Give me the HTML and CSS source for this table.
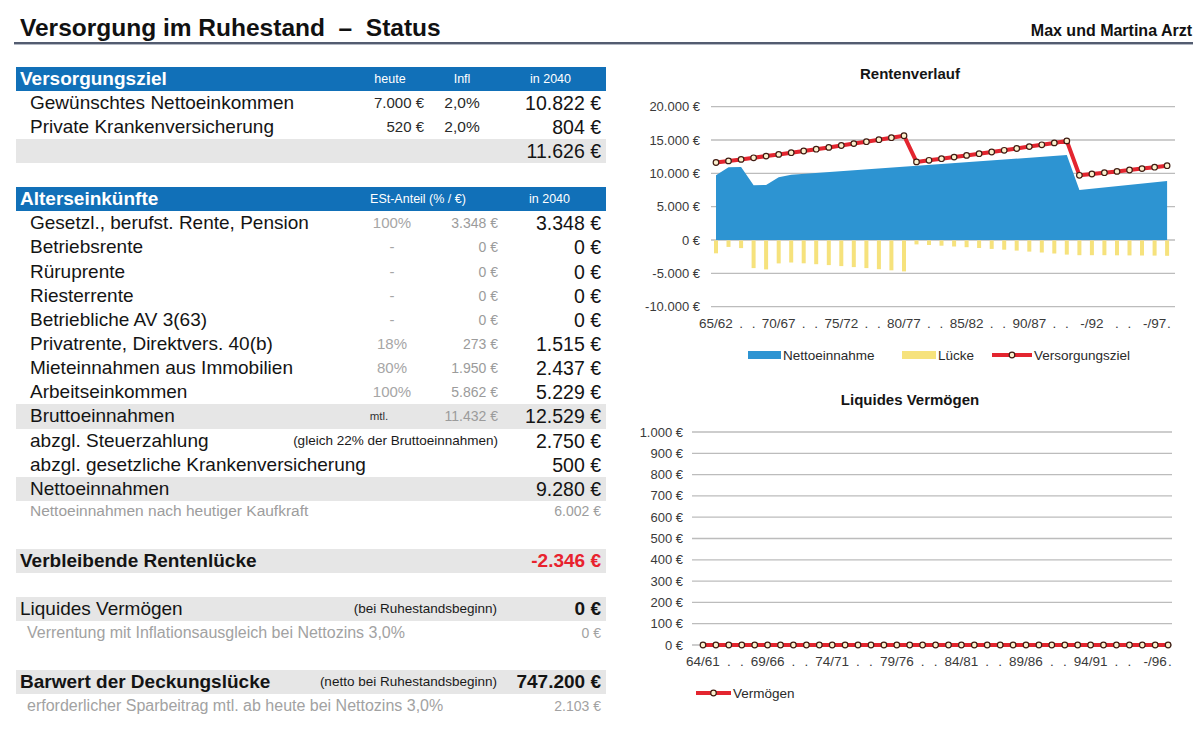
FILE: index.html
```html
<!DOCTYPE html>
<html lang="de">
<head>
<meta charset="utf-8">
<title>Versorgung im Ruhestand – Status</title>
<link rel="stylesheet" href="styles.css">
</head>
<body>
<header class="top">
  <h1 class="title">Versorgung im Ruhestand &nbsp;–&nbsp; Status</h1>
  <div class="owner">Max und Martina Arzt</div>
</header>

<div class="main">
  <section class="left">
    <div class="tbl t1">
      <div class="row head"><span class="lbl">Versorgungsziel</span><span class="c1">heute</span><span class="c2">Infl</span><span class="c3">in 2040</span></div>
      <div class="row"><span class="lbl">Gewünschtes Nettoeinkommen</span><span class="c1">7.000 €</span><span class="c2">2,0%</span><span class="c3">10.822 €</span></div>
      <div class="row"><span class="lbl">Private Krankenversicherung</span><span class="c1">520 €</span><span class="c2">2,0%</span><span class="c3">804 €</span></div>
      <div class="row band"><span class="lbl"></span><span class="c3">11.626 €</span></div>
    </div>

    <div class="tbl t2">
      <div class="row head"><span class="lbl">Alterseinkünfte</span><span class="cspan">ESt-Anteil (% / €)</span><span class="c3">in 2040</span></div>
      <div class="row"><span class="lbl">Gesetzl., berufst. Rente, Pension</span><span class="c1">100%</span><span class="c2">3.348 €</span><span class="c3">3.348 €</span></div>
      <div class="row"><span class="lbl">Betriebsrente</span><span class="c1">-</span><span class="c2">0 €</span><span class="c3">0 €</span></div>
      <div class="row"><span class="lbl">Rüruprente</span><span class="c1">-</span><span class="c2">0 €</span><span class="c3">0 €</span></div>
      <div class="row"><span class="lbl">Riesterrente</span><span class="c1">-</span><span class="c2">0 €</span><span class="c3">0 €</span></div>
      <div class="row"><span class="lbl">Betriebliche AV 3(63)</span><span class="c1">-</span><span class="c2">0 €</span><span class="c3">0 €</span></div>
      <div class="row"><span class="lbl">Privatrente, Direktvers. 40(b)</span><span class="c1">18%</span><span class="c2">273 €</span><span class="c3">1.515 €</span></div>
      <div class="row"><span class="lbl">Mieteinnahmen aus Immobilien</span><span class="c1">80%</span><span class="c2">1.950 €</span><span class="c3">2.437 €</span></div>
      <div class="row"><span class="lbl">Arbeitseinkommen</span><span class="c1">100%</span><span class="c2">5.862 €</span><span class="c3">5.229 €</span></div>
      <div class="row band"><span class="lbl">Bruttoeinnahmen</span><span class="c1 mtl">mtl.</span><span class="c2">11.432 €</span><span class="c3">12.529 €</span></div>
      <div class="row"><span class="lbl">abzgl. Steuerzahlung</span><span class="note">(gleich 22% der Bruttoeinnahmen)</span><span class="c3">2.750 €</span></div>
      <div class="row"><span class="lbl">abzgl. gesetzliche Krankenversicherung</span><span class="c3">500 €</span></div>
      <div class="row band"><span class="lbl">Nettoeinnahmen</span><span class="c3">9.280 €</span></div>
      <div class="row kk"><span class="lbl">Nettoeinnahmen nach heutiger Kaufkraft</span><span class="c3">6.002 €</span></div>
    </div>

    <div class="sum">
      <div class="row band strong gap-a"><span class="lbl">Verbleibende Rentenlücke</span><span class="val neg">-2.346 €</span></div>
      <div class="row band gap-b"><span class="lbl">Liquides Vermögen</span><span class="note">(bei Ruhestandsbeginn)</span><span class="val bold">0 €</span></div>
      <div class="row sub"><span class="lbl">Verrentung mit Inflationsausgleich bei Nettozins 3,0%</span><span class="val">0 €</span></div>
      <div class="row band strong gap-c"><span class="lbl">Barwert der Deckungslücke</span><span class="note">(netto bei Ruhestandsbeginn)</span><span class="val bold">747.200 €</span></div>
      <div class="row sub"><span class="lbl">erforderlicher Sparbeitrag mtl. ab heute bei Nettozins 3,0%</span><span class="val">2.103 €</span></div>
    </div>
  </section>

  <section class="right">
    <svg class="chart c-rente" width="576" height="312" viewBox="620 60 576 312" xmlns="http://www.w3.org/2000/svg">
      <text class="ct" x="910" y="79" text-anchor="middle">Rentenverlauf</text>
      <g class="grid">
        <line x1="711" x2="1175" y1="106.7" y2="106.7"/>
        <line x1="711" x2="1175" y1="140" y2="140"/>
        <line x1="711" x2="1175" y1="173.3" y2="173.3"/>
        <line x1="711" x2="1175" y1="206.7" y2="206.7"/>
        <line x1="711" x2="1175" y1="240" y2="240"/>
        <line x1="711" x2="1175" y1="273.3" y2="273.3"/>
        <line x1="711" x2="1175" y1="306.7" y2="306.7"/>
      </g>
      <g class="ylab" text-anchor="end">
        <text x="700" y="111.2">20.000 €</text>
        <text x="700" y="144.5">15.000 €</text>
        <text x="700" y="177.8">10.000 €</text>
        <text x="700" y="211.2">5.000 €</text>
        <text x="700" y="244.5">0 €</text>
        <text x="700" y="277.8">-5.000 €</text>
        <text x="700" y="311.2">-10.000 €</text>
      </g>
      <polygon class="area" points="716,240 716,175.3 728.5,167.3 741.1,167 753.6,185.3 766.1,185 778.7,177.3 791.2,174.7 1066.8,155 1079.4,190 1167.1,181 1167.1,240"/>
      <g class="gap">
        <rect x="714" y="240.5" width="4" height="12.8"/>
        <rect x="726.5" y="240.5" width="4" height="6.4"/>
        <rect x="739.1" y="240.5" width="4" height="7.6"/>
        <rect x="751.6" y="240.5" width="4" height="27.6"/>
        <rect x="764.1" y="240.5" width="4" height="28.9"/>
        <rect x="776.7" y="240.5" width="4" height="22.9"/>
        <rect x="789.2" y="240.5" width="4" height="22"/>
        <rect x="801.7" y="240.5" width="4" height="22.8"/>
        <rect x="814.2" y="240.5" width="4" height="23.7"/>
        <rect x="826.8" y="240.5" width="4" height="24.6"/>
        <rect x="839.3" y="240.5" width="4" height="25.6"/>
        <rect x="851.8" y="240.5" width="4" height="26.6"/>
        <rect x="864.4" y="240.5" width="4" height="27.6"/>
        <rect x="876.9" y="240.5" width="4" height="28.7"/>
        <rect x="889.4" y="240.5" width="4" height="29.8"/>
        <rect x="902" y="240.5" width="4" height="30.9"/>
        <rect x="914.5" y="240.5" width="4" height="3.9"/>
        <rect x="927" y="240.5" width="4" height="4.5"/>
        <rect x="939.5" y="240.5" width="4" height="5.2"/>
        <rect x="952.1" y="240.5" width="4" height="6"/>
        <rect x="964.6" y="240.5" width="4" height="6.7"/>
        <rect x="977.1" y="240.5" width="4" height="7.5"/>
        <rect x="989.7" y="240.5" width="4" height="8.4"/>
        <rect x="1002.2" y="240.5" width="4" height="9.2"/>
        <rect x="1014.7" y="240.5" width="4" height="10.1"/>
        <rect x="1027.3" y="240.5" width="4" height="11.1"/>
        <rect x="1039.8" y="240.5" width="4" height="12"/>
        <rect x="1052.3" y="240.5" width="4" height="13"/>
        <rect x="1064.8" y="240.5" width="4" height="14.1"/>
        <rect x="1077.4" y="240.5" width="4" height="14.7"/>
        <rect x="1089.9" y="240.5" width="4" height="14.7"/>
        <rect x="1102.4" y="240.5" width="4" height="14.7"/>
        <rect x="1115" y="240.5" width="4" height="14.8"/>
        <rect x="1127.5" y="240.5" width="4" height="14.9"/>
        <rect x="1140" y="240.5" width="4" height="15"/>
        <rect x="1152.6" y="240.5" width="4" height="15.1"/>
        <rect x="1165.1" y="240.5" width="4" height="15.3"/>
      </g>
      <polyline class="rline" points="716,162.5 728.5,160.9 741.1,159.4 753.6,157.8 766.1,156.1 778.7,154.4 791.2,152.7 803.7,151 816.2,149.2 828.8,147.4 841.3,145.5 853.8,143.6 866.4,141.7 878.9,139.7 891.4,137.7 904,135.7 916.5,161.9 929,160.3 941.5,158.7 954.1,157.1 966.6,155.4 979.1,153.7 991.7,152 1004.2,150.3 1016.7,148.5 1029.3,146.6 1041.8,144.8 1054.3,142.9 1066.8,140.9 1079.4,175.3 1091.9,174 1104.4,172.7 1117,171.4 1129.5,170 1142,168.6 1154.6,167.2 1167.1,165.7"/>
      <g class="mk">
        <circle cx="716" cy="162.5" r="2.8"/><circle cx="728.5" cy="160.9" r="2.8"/><circle cx="741.1" cy="159.4" r="2.8"/><circle cx="753.6" cy="157.8" r="2.8"/><circle cx="766.1" cy="156.1" r="2.8"/><circle cx="778.7" cy="154.4" r="2.8"/><circle cx="791.2" cy="152.7" r="2.8"/><circle cx="803.7" cy="151" r="2.8"/><circle cx="816.2" cy="149.2" r="2.8"/><circle cx="828.8" cy="147.4" r="2.8"/><circle cx="841.3" cy="145.5" r="2.8"/><circle cx="853.8" cy="143.6" r="2.8"/><circle cx="866.4" cy="141.7" r="2.8"/><circle cx="878.9" cy="139.7" r="2.8"/><circle cx="891.4" cy="137.7" r="2.8"/><circle cx="904" cy="135.7" r="2.8"/>
        <circle cx="916.5" cy="161.9" r="2.8"/><circle cx="929" cy="160.3" r="2.8"/><circle cx="941.5" cy="158.7" r="2.8"/><circle cx="954.1" cy="157.1" r="2.8"/><circle cx="966.6" cy="155.4" r="2.8"/><circle cx="979.1" cy="153.7" r="2.8"/><circle cx="991.7" cy="152" r="2.8"/><circle cx="1004.2" cy="150.3" r="2.8"/><circle cx="1016.7" cy="148.5" r="2.8"/><circle cx="1029.3" cy="146.6" r="2.8"/><circle cx="1041.8" cy="144.8" r="2.8"/><circle cx="1054.3" cy="142.9" r="2.8"/><circle cx="1066.8" cy="140.9" r="2.8"/>
        <circle cx="1079.4" cy="175.3" r="2.8"/><circle cx="1091.9" cy="174" r="2.8"/><circle cx="1104.4" cy="172.7" r="2.8"/><circle cx="1117" cy="171.4" r="2.8"/><circle cx="1129.5" cy="170" r="2.8"/><circle cx="1142" cy="168.6" r="2.8"/><circle cx="1154.6" cy="167.2" r="2.8"/><circle cx="1167.1" cy="165.7" r="2.8"/>
      </g>
      <g class="xlab" text-anchor="middle">
        <text x="716" y="327.5">65/62</text>
        <text x="741.1" y="327.5">.</text><text x="753.6" y="327.5">.</text>
        <text x="778.7" y="327.5">70/67</text>
        <text x="803.7" y="327.5">.</text><text x="816.2" y="327.5">.</text>
        <text x="841.3" y="327.5">75/72</text>
        <text x="866.4" y="327.5">.</text><text x="878.9" y="327.5">.</text>
        <text x="904" y="327.5">80/77</text>
        <text x="929" y="327.5">.</text><text x="941.5" y="327.5">.</text>
        <text x="966.6" y="327.5">85/82</text>
        <text x="991.7" y="327.5">.</text><text x="1004.2" y="327.5">.</text>
        <text x="1029.3" y="327.5">90/87</text>
        <text x="1054.3" y="327.5">.</text><text x="1066.8" y="327.5">.</text>
        <text x="1091.9" y="327.5">-/92</text>
        <text x="1117" y="327.5">.</text><text x="1129.5" y="327.5">.</text>
        <text x="1154.6" y="327.5">-/97</text>
        <text x="1169" y="327.5">.</text>
      </g>
      <g class="legend">
        <rect class="sw-blue" x="748" y="351" width="33" height="8"/>
        <text x="783" y="360">Nettoeinnahme</text>
        <rect class="sw-yellow" x="902" y="351" width="34" height="8"/>
        <text x="938" y="360">Lücke</text>
        <line class="rline" x1="992" x2="1032" y1="355" y2="355"/>
        <circle class="mk1" cx="1012" cy="355" r="2.8"/>
        <text x="1034" y="360">Versorgungsziel</text>
      </g>
    </svg>

    <svg class="chart c-verm" width="576" height="335" viewBox="620 385 576 335" xmlns="http://www.w3.org/2000/svg">
      <text class="ct" x="910" y="405" text-anchor="middle">Liquides Vermögen</text>
      <g class="grid">
        <line x1="692" x2="1172" y1="432" y2="432"/>
        <line x1="692" x2="1172" y1="453.3" y2="453.3"/>
        <line x1="692" x2="1172" y1="474.6" y2="474.6"/>
        <line x1="692" x2="1172" y1="495.9" y2="495.9"/>
        <line x1="692" x2="1172" y1="517.2" y2="517.2"/>
        <line x1="692" x2="1172" y1="538.5" y2="538.5"/>
        <line x1="692" x2="1172" y1="559.8" y2="559.8"/>
        <line x1="692" x2="1172" y1="581.1" y2="581.1"/>
        <line x1="692" x2="1172" y1="602.4" y2="602.4"/>
        <line x1="692" x2="1172" y1="623.7" y2="623.7"/>
        <line x1="692" x2="1172" y1="645" y2="645"/>
      </g>
      <g class="ylab" text-anchor="end">
        <text x="683" y="436.5">1.000 €</text>
        <text x="683" y="457.8">900 €</text>
        <text x="683" y="479.1">800 €</text>
        <text x="683" y="500.4">700 €</text>
        <text x="683" y="521.7">600 €</text>
        <text x="683" y="543">500 €</text>
        <text x="683" y="564.3">400 €</text>
        <text x="683" y="585.6">300 €</text>
        <text x="683" y="606.9">200 €</text>
        <text x="683" y="628.2">100 €</text>
        <text x="683" y="649.5">0 €</text>
      </g>
      <line class="rline" x1="703" x2="1168.1" y1="645" y2="645"/>
      <g class="mk">
        <circle cx="703" cy="645" r="2.8"/><circle cx="715.9" cy="645" r="2.8"/><circle cx="728.8" cy="645" r="2.8"/><circle cx="741.8" cy="645" r="2.8"/><circle cx="754.7" cy="645" r="2.8"/><circle cx="767.6" cy="645" r="2.8"/><circle cx="780.5" cy="645" r="2.8"/><circle cx="793.4" cy="645" r="2.8"/><circle cx="806.4" cy="645" r="2.8"/><circle cx="819.3" cy="645" r="2.8"/><circle cx="832.2" cy="645" r="2.8"/><circle cx="845.1" cy="645" r="2.8"/><circle cx="858" cy="645" r="2.8"/><circle cx="871" cy="645" r="2.8"/><circle cx="883.9" cy="645" r="2.8"/><circle cx="896.8" cy="645" r="2.8"/><circle cx="909.7" cy="645" r="2.8"/><circle cx="922.6" cy="645" r="2.8"/><circle cx="935.6" cy="645" r="2.8"/>
        <circle cx="948.5" cy="645" r="2.8"/><circle cx="961.4" cy="645" r="2.8"/><circle cx="974.3" cy="645" r="2.8"/><circle cx="987.2" cy="645" r="2.8"/><circle cx="1000.2" cy="645" r="2.8"/><circle cx="1013.1" cy="645" r="2.8"/><circle cx="1026" cy="645" r="2.8"/><circle cx="1038.9" cy="645" r="2.8"/><circle cx="1051.8" cy="645" r="2.8"/><circle cx="1064.8" cy="645" r="2.8"/><circle cx="1077.7" cy="645" r="2.8"/><circle cx="1090.6" cy="645" r="2.8"/><circle cx="1103.5" cy="645" r="2.8"/><circle cx="1116.4" cy="645" r="2.8"/><circle cx="1129.4" cy="645" r="2.8"/><circle cx="1142.3" cy="645" r="2.8"/><circle cx="1155.2" cy="645" r="2.8"/><circle cx="1168.1" cy="645" r="2.8"/>
      </g>
      <g class="xlab" text-anchor="middle">
        <text x="703" y="666">64/61</text>
        <text x="728.8" y="666">.</text><text x="741.8" y="666">.</text>
        <text x="767.6" y="666">69/66</text>
        <text x="793.4" y="666">.</text><text x="806.4" y="666">.</text>
        <text x="832.2" y="666">74/71</text>
        <text x="858" y="666">.</text><text x="871" y="666">.</text>
        <text x="896.8" y="666">79/76</text>
        <text x="922.6" y="666">.</text><text x="935.6" y="666">.</text>
        <text x="961.4" y="666">84/81</text>
        <text x="987.2" y="666">.</text><text x="1000.2" y="666">.</text>
        <text x="1026" y="666">89/86</text>
        <text x="1051.8" y="666">.</text><text x="1064.8" y="666">.</text>
        <text x="1090.6" y="666">94/91</text>
        <text x="1116.4" y="666">.</text><text x="1129.4" y="666">.</text>
        <text x="1155.2" y="666">-/96</text>
        <text x="1170" y="666">.</text>
      </g>
      <g class="legend">
        <line class="rline" x1="696" x2="731" y1="693" y2="693"/>
        <circle class="mk1" cx="713.5" cy="693" r="2.8"/>
        <text x="733" y="698">Vermögen</text>
      </g>
    </svg>
  </section>
</div>
</body>
</html>
```

FILE: styles.css
```css
* { box-sizing: border-box; }

body {
  margin: 0;
  width: 1200px;
  height: 733px;
  overflow: hidden;
  background: #ffffff;
  color: #141414;
  font-family: "Liberation Sans", Arial, sans-serif;
}

/* ---------- header ---------- */
.top {
  display: flex;
  justify-content: space-between;
  align-items: baseline;
  margin: 0 7px 0 14px;
  padding: 15px 1px 1px 6px;
  border-bottom: 2px solid #535c70;
  box-shadow: 0 1px 0 #b3b8c3;
}
.title {
  margin: 0;
  font-size: 24.5px;
  line-height: 26px;
  font-weight: bold;
  color: #111;
}
.owner {
  font-size: 16px;
  line-height: 20px;
  font-weight: bold;
  color: #111;
}

/* ---------- layout ---------- */
.main {
  display: flex;
  gap: 14px;
  padding-left: 16px;
}
.left {
  flex: none;
  width: 590px;
  padding-top: 23px;
}
.right {
  flex: none;
  width: 576px;
  padding-top: 16px;
  display: flex;
  flex-direction: column;
  gap: 13px;
}

/* ---------- tables ---------- */
.tbl + .tbl { margin-top: 24px; }

.row {
  display: flex;
  align-items: center;
  height: 24px;
  padding: 0 5px 0 14px;
  font-size: 19px;
  line-height: 24px;
  white-space: nowrap;
}
.t2 .row { height: 24.17px; }

.lbl { flex: 1; min-width: 0; }

.c1, .c2, .c3, .cspan, .note, .val { flex: none; }

.t1 .c1 { width: 68px; text-align: right; font-size: 15px; color: #2a2a2a; }
.t1 .c2 { width: 76px; text-align: center; font-size: 15.5px; color: #2a2a2a; }
.t1 .c3 { width: 101px; text-align: right; font-size: 19.5px; }

.t2 .c1 { width: 60px; text-align: center; font-size: 15px; color: #a6a6a6; }
.t2 .c2 { width: 76px; text-align: right; font-size: 14px; color: #9b9b9b; }
.t2 .c3 { width: 103px; text-align: right; font-size: 19.5px; }
.t2 .c1.mtl { font-size: 11.5px; color: #333; padding-right: 26px; }

.head {
  background: #1170b8;
  color: #ffffff;
  padding-left: 4px;
}
.head .lbl { font-weight: bold; }
.t1 .head .c1,
.t1 .head .c2,
.t1 .head .c3,
.t2 .head .c3 {
  font-size: 12.5px;
  color: #ffffff;
  text-align: center;
}
.head .cspan {
  width: 136px;
  padding-right: 24px;
  text-align: center;
  font-size: 12.5px;
}

.band { background: #e6e6e6; }

.note {
  font-size: 13.5px;
  text-align: right;
  color: #1a1a1a;
}

.kk { height: 20px !important; font-size: 15.5px; color: #9d9d9d; }
.t2 .kk .c3 { font-size: 14px; color: #9d9d9d; }

/* ---------- summary ---------- */
.sum .row { padding-left: 4px; }
.sum .val { width: 104px; text-align: right; font-size: 19px; }
.strong .lbl { font-weight: bold; }
.val.bold { font-weight: bold; }
.val.neg { font-weight: bold; color: #e8222e; }
.gap-a { margin-top: 28px; }
.gap-b { margin-top: 24px; }
.gap-c { margin-top: 25px; }
.sum .sub {
  padding-left: 11px;
  font-size: 16px;
  color: #a2a2a2;
}
.sum .sub .val { font-size: 14px; color: #a2a2a2; }

/* ---------- charts ---------- */
.chart {
  display: block;
  font-family: "Liberation Sans", Arial, sans-serif;
}
.ct { font-size: 15px; font-weight: bold; fill: #151515; }
.grid line { stroke: #bcbcbc; stroke-width: 1.3; }
.ylab text { font-size: 13px; fill: #3a3a3a; }
.xlab text { font-size: 13.5px; fill: #3a3a3a; }
.legend text { font-size: 13.5px; fill: #2a2a2a; }
.area { fill: #2d94d2; }
.gap rect { fill: #f6e27c; }
.rline { fill: none; stroke: #e3252f; stroke-width: 4; stroke-linejoin: round; }
.mk circle, .mk1 { fill: #fcf1cf; stroke: #3f1c12; stroke-width: 1.2; }
.sw-blue { fill: #2d94d2; }
.sw-yellow { fill: #f6e27c; }
```
